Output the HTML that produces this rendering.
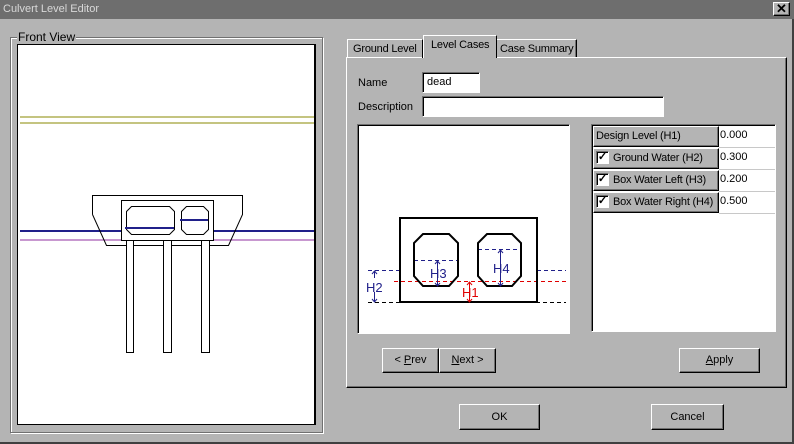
<!DOCTYPE html>
<html><head><style>
*{margin:0;padding:0;box-sizing:border-box}
body{width:794px;height:444px;background:#b4b4b4;font-family:"Liberation Sans",sans-serif;font-size:11px;color:#000;position:relative;overflow:hidden}
.a{position:absolute}
.raised{border-top:1px solid #fff;border-left:1px solid #fff;border-right:1px solid #000;border-bottom:1px solid #000;box-shadow:inset -1px -1px 0 #707070}
.sunk{border-top:1px solid #707070;border-left:1px solid #707070;border-right:1px solid #fff;border-bottom:1px solid #fff;box-shadow:inset 1px 1px 0 #000}
.btn{text-align:center;line-height:22px}
.t{white-space:nowrap}
.tb{letter-spacing:-0.2px}
</style></head><body>
<div class="a" style="left:0;top:0;width:794px;height:19px;background:#6e6e6e"></div>
<div class="a t" style="left:3px;top:3px;color:#d8d8d8;font-size:11px">Culvert Level Editor</div>
<div class="a raised" style="left:773px;top:2px;width:17px;height:14px;background:#b4b4b4;font-size:13px;font-weight:bold;line-height:11px;text-align:center">✕</div>

<div class="a" style="left:10px;top:37px;width:313px;height:396px;border:1px solid #707070;box-shadow:1px 1px 0 #fff inset,1px 1px 0 #fff"></div>
<div class="a t" style="left:17px;top:30px;background:#b4b4b4;padding:0 1px;font-size:12px">Front View</div>
<div class="a" style="left:17px;top:44px;width:299px;height:381px;background:#fff;border:1px solid #000;border-right:2px solid #000"></div>
<svg class="a" style="left:0;top:0" width="330" height="444">
<g fill="none" shape-rendering="crispEdges">
<line x1="20" y1="117" x2="314" y2="117" stroke="#8a8a00"/>
<line x1="20" y1="123" x2="314" y2="123" stroke="#8a8a00"/>
<line x1="20" y1="240" x2="314" y2="240" stroke="#9030a0"/>
<line x1="20" y1="231" x2="121" y2="231" stroke="#20208a" stroke-width="2"/>
<line x1="213" y1="231" x2="314" y2="231" stroke="#20208a" stroke-width="2"/>
</g>
<g fill="none" stroke="#000" stroke-width="1">
<polyline points="92.5,214.5 92.5,195.5 242.5,195.5 242.5,214.5 228.5,245.5 106.5,245.5 92.5,214.5"/>
<rect x="121.5" y="200.5" width="92" height="40" fill="#fff"/>
<polygon points="131.5,206.5 169.5,206.5 174.5,211.5 174.5,229.5 169.5,234.5 131.5,234.5 126.5,229.5 126.5,211.5"/>
<polygon points="186.5,206.5 203.5,206.5 208.5,211.5 208.5,229.5 203.5,234.5 186.5,234.5 181.5,229.5 181.5,211.5"/>
<rect x="126.5" y="240.5" width="7" height="112" fill="#fff"/>
<rect x="163.5" y="240.5" width="8" height="112" fill="#fff"/>
<rect x="201.5" y="240.5" width="8" height="112" fill="#fff"/>
</g>
<line x1="125" y1="228" x2="174" y2="228" stroke="#20208a" stroke-width="2"/>
<line x1="180" y1="220" x2="208" y2="220" stroke="#20208a" stroke-width="2"/>
</svg>

<div class="a" style="left:346px;top:57px;width:441px;height:331px;border-top:1px solid #fff;border-left:1px solid #fff;border-right:1px solid #000;border-bottom:1px solid #000;box-shadow:inset -1px -1px 0 #707070"></div>
<div class="a t tb" style="left:347px;top:39px;width:76px;height:19px;border-top:1px solid #fff;border-left:1px solid #fff;border-right:1px solid #000;padding:3px 0 0 5px">Ground Level</div>
<div class="a t tb" style="left:423px;top:35px;width:74px;height:23px;background:#b4b4b4;border-top:1px solid #fff;border-left:1px solid #fff;border-right:1px solid #000;padding:3px 0 0 7px">Level Cases</div>
<div class="a t tb" style="left:497px;top:39px;width:80px;height:18px;border-top:1px solid #fff;border-right:1px solid #000;box-shadow:inset -1px 0 0 #707070;padding:3px 0 0 3px">Case Summary</div>

<div class="a t" style="left:358px;top:77px">Name</div>
<div class="a sunk" style="left:422px;top:72px;width:58px;height:21px;background:#fff;padding:3px 0 0 4px">dead</div>
<div class="a t" style="left:358px;top:101px">Description</div>
<div class="a sunk" style="left:422px;top:96px;width:242px;height:21px;background:#fff"></div>

<div class="a sunk" style="left:357px;top:124px;width:213px;height:210px;background:#fff"></div>
<svg class="a" style="left:0;top:0" width="794" height="444">
<g fill="none" stroke-width="1" shape-rendering="crispEdges">
<line x1="368" y1="270.5" x2="400" y2="270.5" stroke="#20208a" stroke-dasharray="4,3"/>
<line x1="537" y1="270.5" x2="566" y2="270.5" stroke="#20208a" stroke-dasharray="4,3"/>
<line x1="414" y1="260.5" x2="458" y2="260.5" stroke="#20208a" stroke-dasharray="4,3"/>
<line x1="478" y1="249.5" x2="521" y2="249.5" stroke="#20208a" stroke-dasharray="4,3"/>
<line x1="394" y1="281.5" x2="566" y2="281.5" stroke="#e00000" stroke-dasharray="4,3"/>
<line x1="368" y1="302.5" x2="566" y2="302.5" stroke="#000" stroke-dasharray="4,3"/>
</g>
<g fill="none" stroke="#000" stroke-width="2">
<rect x="400" y="218" width="137" height="84"/>
<polygon points="423,234 449,234 458,243 458,276 449,286 423,286 414,276 414,243"/>
<polygon points="487,234 512,234 521,243 521,276 512,286 487,286 478,276 478,243"/>
</g>
<g stroke="#20208a" stroke-width="1" fill="none">
<line x1="374.5" y1="271" x2="374.5" y2="302"/><polyline points="372,274 374.5,271 377,274"/><polyline points="372,299 374.5,302 377,299"/>
<line x1="437.5" y1="261" x2="437.5" y2="286"/><polyline points="435,264 437.5,261 440,264"/><polyline points="435,283 437.5,286 440,283"/>
<line x1="500.5" y1="250" x2="500.5" y2="286"/><polyline points="498,253 500.5,250 503,253"/><polyline points="498,283 500.5,286 503,283"/>
</g>
<g stroke="#e00000" fill="none"><line x1="469.5" y1="282" x2="469.5" y2="302"/><polyline points="467,285 469.5,282 472,285"/><polyline points="467,299 469.5,302 472,299"/></g>
<g font-family="Liberation Sans,sans-serif" font-size="13" fill="#20208a">
<rect x="366" y="278" width="17" height="14" fill="#fff"/>
<text x="366" y="292">H2</text><text x="430" y="278">H3</text><text x="493" y="273">H4</text>
<text x="462" y="297" fill="#e00000">H1</text>
</g>
</svg>

<div class="a sunk" style="left:591px;top:124px;width:185px;height:208px;background:#fff"></div>
<div class="a raised t tb" style="left:593px;top:126px;width:126px;height:21px;background:#b4b4b4;padding:3px 0 0 2px">Design Level (H1)</div>
<div class="a t" style="left:720px;top:129px">0.000</div>
<div class="a" style="left:719px;top:147px;width:56px;height:1px;background:#c8c8c8"></div>
<div class="a raised t tb" style="left:593px;top:148px;width:126px;height:21px;background:#b4b4b4;padding:3px 0 0 19px">Ground Water (H2)</div>
<div class="a t" style="left:720px;top:151px">0.300</div>
<div class="a" style="left:719px;top:169px;width:56px;height:1px;background:#c8c8c8"></div>
<div class="a raised t tb" style="left:593px;top:170px;width:126px;height:21px;background:#b4b4b4;padding:3px 0 0 19px">Box Water Left (H3)</div>
<div class="a t" style="left:720px;top:173px">0.200</div>
<div class="a" style="left:719px;top:191px;width:56px;height:1px;background:#c8c8c8"></div>
<div class="a raised t tb" style="left:593px;top:192px;width:126px;height:21px;background:#b4b4b4;padding:3px 0 0 19px;overflow:hidden">Box Water Right (H4)</div>
<div class="a t" style="left:720px;top:195px">0.500</div>
<div class="a" style="left:719px;top:213px;width:56px;height:1px;background:#c8c8c8"></div>
<div class="a sunk" style="left:596px;top:151px;width:13px;height:13px;background:#fff;font-size:11px;line-height:10px;text-align:center;font-weight:bold">✓</div>
<div class="a sunk" style="left:596px;top:173px;width:13px;height:13px;background:#fff;font-size:11px;line-height:10px;text-align:center;font-weight:bold">✓</div>
<div class="a sunk" style="left:596px;top:195px;width:13px;height:13px;background:#fff;font-size:11px;line-height:10px;text-align:center;font-weight:bold">✓</div>

<div class="a raised btn" style="left:382px;top:348px;width:57px;height:25px">&lt; <u>P</u>rev</div>
<div class="a raised btn" style="left:439px;top:348px;width:57px;height:25px"><u>N</u>ext &gt;</div>
<div class="a raised btn" style="left:679px;top:348px;width:81px;height:25px"><u>A</u>pply</div>
<div class="a raised btn" style="left:459px;top:404px;width:81px;height:26px;line-height:24px">OK</div>
<div class="a raised btn" style="left:651px;top:404px;width:73px;height:26px;line-height:24px">Cancel</div>
<div class="a" style="left:0;top:442px;width:794px;height:2px;background:#404040"></div>
<div class="a" style="left:792px;top:19px;width:2px;height:425px;background:#404040"></div>
</body></html>
